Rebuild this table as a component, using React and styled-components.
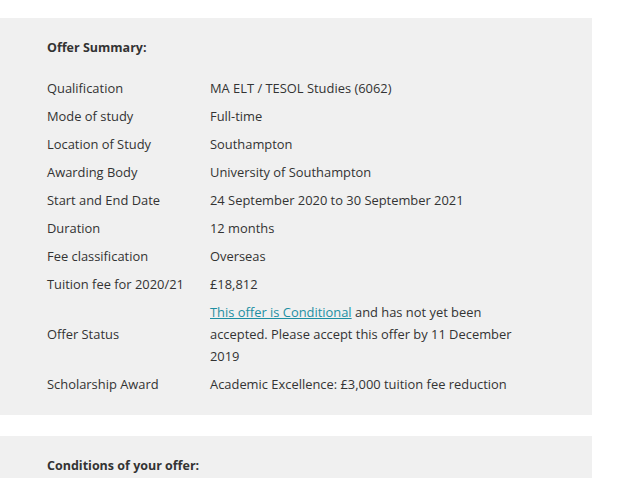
import React from 'react';
import styled, { createGlobalStyle } from 'styled-components';

const colors = {
  $page: '#ffffff',
  $panel: '#f0f0f0',
  $text: '#333333',
  $link: '#1d8fa3'
};

const GlobalStyle = createGlobalStyle`
  html, body {
    margin: 0;
    padding: 0;
    background: ${colors.$page};
  }
  body {
    font-family: "Open Sans", "Noto Sans", sans-serif;
    color: ${colors.$text};
  }
`;

const Page = styled.div`
  padding-top: 18px;
  width: 592px;
  display: flex;
  flex-direction: column;
  gap: 21px;
`;

const Panel = styled.section`
  background: ${colors.$panel};
  padding: 21px 0 17px 47px;
`;

const Heading = styled.h3`
  margin: 0 0 17px;
  font-size: 12.5px;
  line-height: 18px;
  font-weight: 700;
`;

const Table = styled.table`
  border-collapse: collapse;
  font-size: 12.9px;
  line-height: 22px;
`;

const Label = styled.td`
  width: 163px;
  padding: 3px 0;
  vertical-align: middle;
`;

const Value = styled.td`
  width: 305px;
  padding: 3px 0;
`;

const Link = styled.a`
  color: ${colors.$link};
  text-decoration: underline;
`;

const rows = [
  ['Qualification', 'MA ELT / TESOL Studies (6062)'],
  ['Mode of study', 'Full-time'],
  ['Location of Study', 'Southampton'],
  ['Awarding Body', 'University of Southampton'],
  ['Start and End Date', '24 September 2020 to 30 September 2021'],
  ['Duration', '12 months'],
  ['Fee classification', 'Overseas'],
  ['Tuition fee for 2020/21', '£18,812'],
  [
    'Offer Status',
    <>
      <Link href="#">This offer is Conditional</Link> and has not yet been
      accepted. Please accept this offer by 11 December 2019
    </>
  ],
  ['Scholarship Award', 'Academic Excellence: £3,000 tuition fee reduction']
];

const App = () => (
  <>
    <GlobalStyle />
    <Page>
      <Panel>
        <Heading>Offer Summary:</Heading>
        <Table>
          <tbody>
            {rows.map(([label, value]) => (
              <tr key={label}>
                <Label>{label}</Label>
                <Value>{value}</Value>
              </tr>
            ))}
          </tbody>
        </Table>
      </Panel>
      <Panel>
        <Heading>Conditions of your offer:</Heading>
      </Panel>
    </Page>
  </>
);

export default App;
